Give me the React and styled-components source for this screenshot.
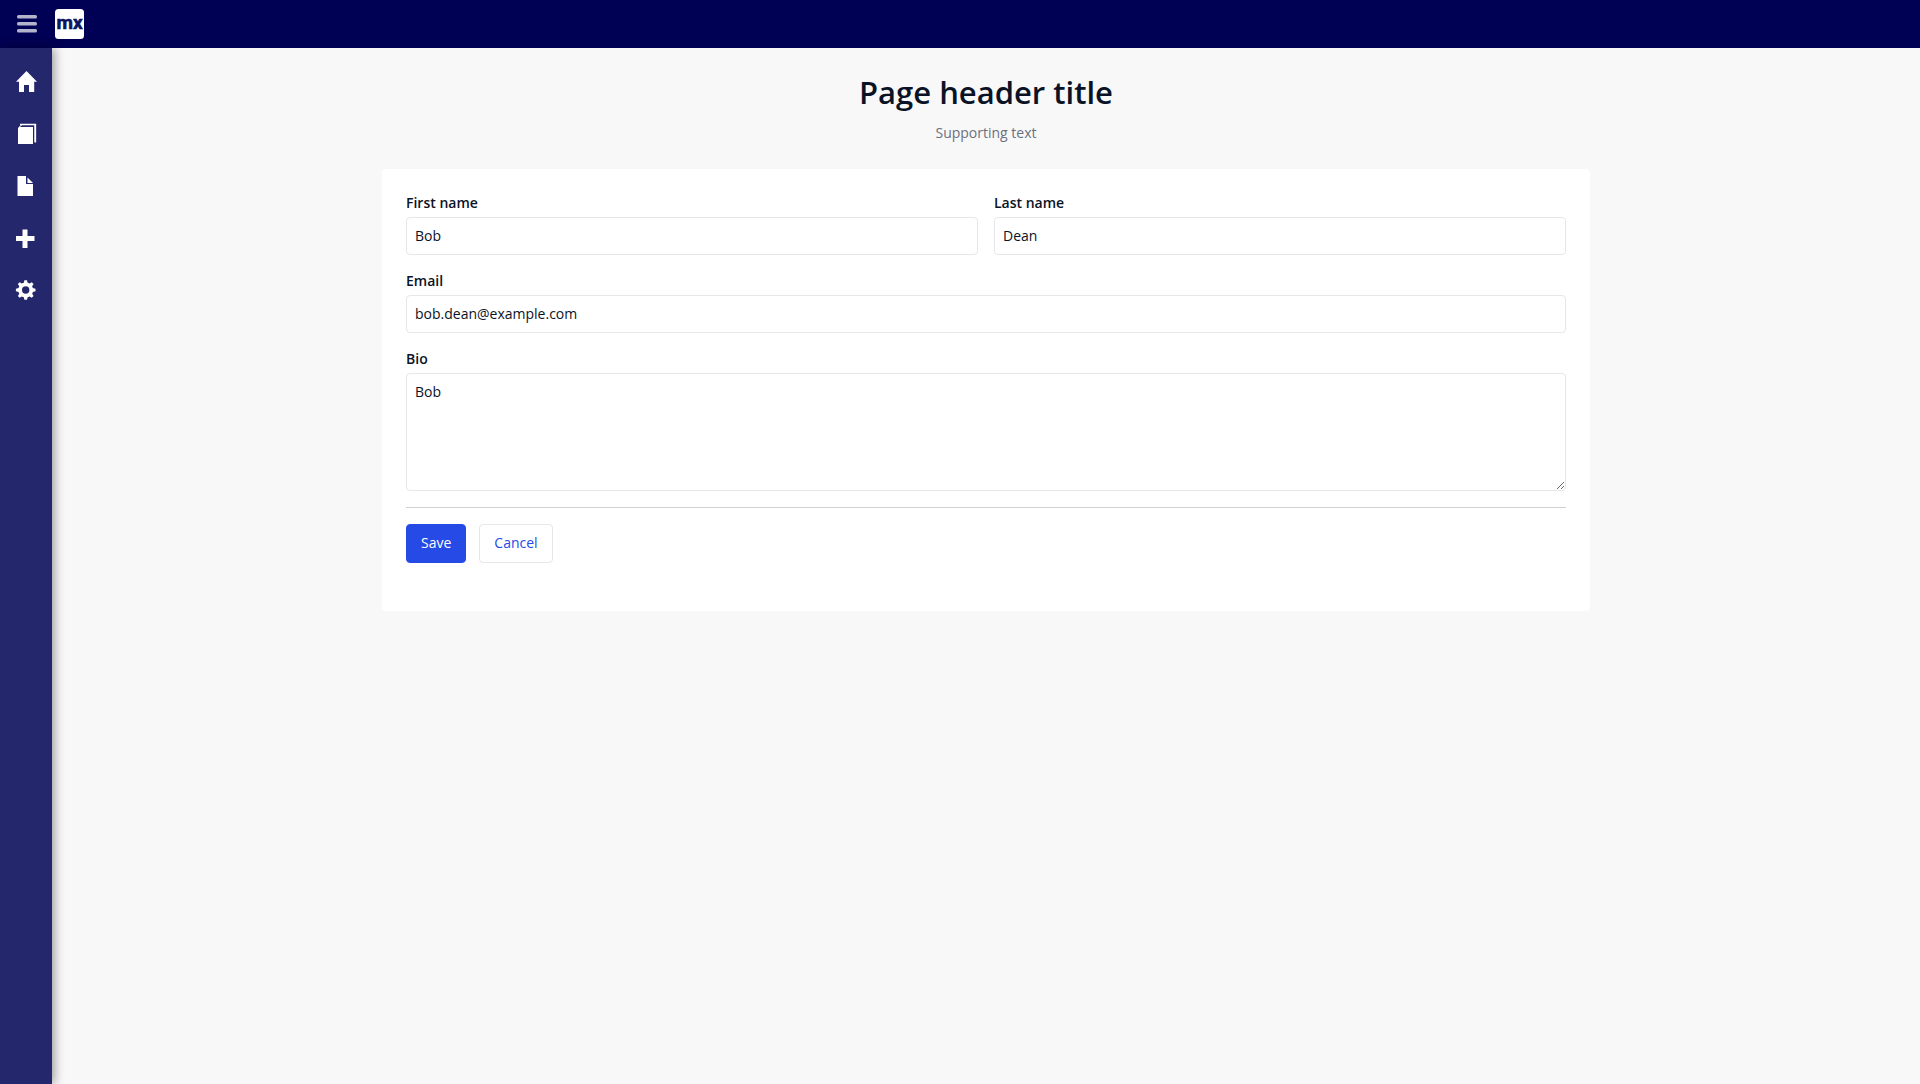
import React from "react";
import styled, { createGlobalStyle, css } from "styled-components";

const GlobalStyle = createGlobalStyle`
  *, *::before, *::after { box-sizing: border-box; }
  body {
    margin: 0;
    background: #f8f8f8;
    color: #0a1326;
    font: 14px/20px "Open Sans", "Noto Sans", sans-serif;
  }
`;

const Shell = styled.div`
  display: flex;
  flex-direction: column;
  min-height: 100vh;
`;

const TopBar = styled.header`
  display: flex;
  align-items: center;
  gap: 12px;
  height: 48px;
  padding-left: 11px;
  background: #000054;
`;

const MenuToggle = styled.button`
  display: flex;
  align-items: center;
  justify-content: center;
  width: 32px;
  height: 32px;
  padding: 0;
  border: 0;
  background: none;
  color: #b3b3cc;
  cursor: pointer;
`;

const Logo = styled.a`
  display: flex;
  width: 29px;
  height: 30px;
  text-decoration: none;
`;

const Body = styled.div`
  display: flex;
  flex: 1;
`;

const Sidebar = styled.nav`
  display: flex;
  flex-direction: column;
  flex: none;
  width: 52px;
  padding-top: 8px;
  background: #24276c;
  box-shadow: 2px 0 10px rgba(0, 0, 0, 0.4);
`;

const NavItem = styled.a`
  display: flex;
  align-items: center;
  padding-left: 14px;
  height: 52px;
  color: #fff;
`;

const Main = styled.main`
  flex: 1;
  min-width: 0;
  padding: 24px 16px;
`;

const PageHeader = styled.div`
  margin-bottom: 26px;
  text-align: center;
`;

const Title = styled.h1`
  margin: 0 0 10px;
  font-size: 31px;
  font-weight: 600;
  line-height: 40px;
`;

const Subtitle = styled.p`
  margin: 0;
  line-height: 21px;
  color: #6c717e;
`;

const Card = styled.form`
  max-width: 1208px;
  margin: 0 auto;
  padding: 24px 24px 48px;
  border-radius: 4px;
  background: #fff;
`;

const Fields = styled.div`
  display: grid;
  grid-template-columns: 1fr 1fr;
  gap: 16px;
`;

const Field = styled.div`
  display: flex;
  flex-direction: column;
  gap: 4px;
  grid-column: ${({ $wide }) => ($wide ? "1 / -1" : "auto")};
`;

const Label = styled.label`
  font-weight: 600;
  line-height: 20px;
`;

const control = css`
  width: 100%;
  padding: 8px;
  border: 1px solid #e7e7e9;
  border-radius: 4px;
  background: #fff;
  color: #0a1326;
  font: inherit;
`;

const Input = styled.input`
  ${control}
  height: 38px;
  padding-bottom: 10px;
  line-height: 18px;
`;

const TextArea = styled.textarea`
  ${control}
  display: block;
  height: 118px;
  resize: vertical;
`;

const Divider = styled.hr`
  height: 1px;
  margin: 16px 0;
  border: 0;
  background: #ced0d3;
`;

const Actions = styled.div`
  display: flex;
  gap: 13px;
`;

const Button = styled.button`
  height: 39px;
  padding: 0 14px 2px;
  border: 1px solid ${({ $primary }) => ($primary ? "#264ae5" : "#e7e7e9")};
  border-radius: 4px;
  background: ${({ $primary }) => ($primary ? "#264ae5" : "#fff")};
  color: ${({ $primary }) => ($primary ? "#fff" : "#264ae5")};
  font: inherit;
  cursor: pointer;
`;

const Icon = ({ children }) => (
  <svg width="24" height="24" viewBox="0 0 24 24" fill="currentColor" aria-hidden="true">
    {children}
  </svg>
);

const navItems = [
  {
    name: "Home",
    icon: <path d="M12.5 1 23 11.8H20.2V22H15V15H10V22H5V11.8H2Z" />,
  },
  {
    name: "Library",
    icon: (
      <>
        <path d="M6 4H19V22H4V6Z" />
        <path d="M6 2.5H21.5V20.5" fill="none" stroke="currentColor" strokeWidth="1.3" />
        <path d="M20.3 3V20.5L22 19V2.5Z" />
        <path d="M5 5 7.5 2.3V4Z" />
        <path d="M6.5 4.5H19.5V20" fill="none" stroke="#24276c" strokeWidth="1" />
      </>
    ),
  },
  {
    name: "Pages",
    icon: (
      <>
        <path d="M3.5 2H12V10H19V22H3.5Z" />
        <path d="M13.5 3.5 19 9H13.5Z" />
      </>
    ),
  },
  {
    name: "Add",
    icon: <path d="M8.5 3.5H13.5V10H20.5V15H13.5V22H8.5V15H2V10H8.5Z" />,
  },
  {
    name: "Settings",
    icon: (
      <>
        <circle cx="11.7" cy="12" r="5.6" fill="none" stroke="currentColor" strokeWidth="3.8" />
        {[0, 45, 90, 135, 180, 225, 270, 315].map((angle) => (
          <path key={angle} d="M9.5 6 10.4 2.2H13L13.9 6Z" transform={`rotate(${angle} 11.7 12)`} />
        ))}
      </>
    ),
  },
];

export default function App() {
  return (
    <Shell>
      <GlobalStyle />
      <TopBar>
        <MenuToggle type="button" aria-label="Toggle menu">
          <svg width="20" height="18" viewBox="0 0 20 18" fill="currentColor" aria-hidden="true">
            <rect width="20" height="3.4" rx="1.5" />
            <rect y="7" width="20" height="3.4" rx="1.5" />
            <rect y="14" width="20" height="3.4" rx="1.5" />
          </svg>
        </MenuToggle>
        <Logo href="#" aria-label="Mendix">
          <svg width="29" height="30" viewBox="0 0 29 30" aria-hidden="true">
            <rect width="29" height="30" rx="3.5" fill="#fff" />
            <text
              x="14.5"
              y="20"
              textAnchor="middle"
              fill="#0a1560"
              stroke="#0a1560"
              strokeWidth="0.6"
              fontFamily="'Liberation Sans Narrow', Roboto, sans-serif"
              fontSize="19"
              fontWeight="700"
            >
              mx
            </text>
          </svg>
        </Logo>
      </TopBar>
      <Body>
        <Sidebar aria-label="Main">
          {navItems.map(({ name, icon }) => (
            <NavItem key={name} href="#" aria-label={name}>
              <Icon>{icon}</Icon>
            </NavItem>
          ))}
        </Sidebar>
        <Main>
          <PageHeader>
            <Title>Page header title</Title>
            <Subtitle>Supporting text</Subtitle>
          </PageHeader>
          <Card onSubmit={(event) => event.preventDefault()}>
            <Fields>
              <Field>
                <Label htmlFor="first-name">First name</Label>
                <Input id="first-name" type="text" defaultValue="Bob" />
              </Field>
              <Field>
                <Label htmlFor="last-name">Last name</Label>
                <Input id="last-name" type="text" defaultValue="Dean" />
              </Field>
              <Field $wide>
                <Label htmlFor="email">Email</Label>
                <Input id="email" type="email" defaultValue="bob.dean@example.com" />
              </Field>
              <Field $wide>
                <Label htmlFor="bio">Bio</Label>
                <TextArea id="bio" defaultValue="Bob" />
              </Field>
            </Fields>
            <Divider />
            <Actions>
              <Button type="submit" $primary>Save</Button>
              <Button type="button">Cancel</Button>
            </Actions>
          </Card>
        </Main>
      </Body>
    </Shell>
  );
}
